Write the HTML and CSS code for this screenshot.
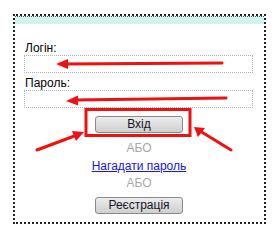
FILE: index.html
```html
<!DOCTYPE html>
<html lang="uk">
<head>
    <meta charset="UTF-8">
    <title>Вхід</title>
    <link rel="stylesheet" href="styles.css">
</head>
<body>
    <div class="frame">
        <div class="band"></div>
        <form class="login-form">
            <label class="field-label" for="login">Логін:</label>
            <input class="field" type="text" id="login">
            <label class="field-label second" for="password">Пароль:</label>
            <input class="field" type="password" id="password">

            <div class="actions">
                <button type="button" class="btn btn-enter">Вхід</button>
                <span class="or or-first">АБО</span>
                <a href="#" class="remind">Нагадати пароль</a>
                <span class="or or-second">АБО</span>
                <button type="button" class="btn btn-register">Реєстрація</button>
            </div>
        </form>
    </div>

    <!-- red annotation marks over the form -->
    <svg class="marks" width="279" height="242" viewBox="0 0 279 242">
        <g stroke="#f01010" stroke-width="3" fill="none" stroke-linecap="round">
            <line x1="222" y1="63" x2="64" y2="64"/>
            <line x1="226" y1="98" x2="74" y2="100"/>
            <line x1="37" y1="150" x2="77" y2="135"/>
            <line x1="231" y1="150" x2="200" y2="131"/>
            <rect x="86" y="109.5" width="104" height="26" stroke-linecap="butt"/>
        </g>
        <g fill="#f01010">
            <polygon points="56,64 68,59 68,69"/>
            <polygon points="66,101 78,95.5 78,105.5"/>
            <polygon points="84,132 72,131 76,141"/>
            <polygon points="194,127 198,137 205,128"/>
        </g>
    </svg>
</body>
</html>
```

FILE: styles.css
```css
body {
    margin: 0;
    position: relative;
    width: 279px;
    height: 242px;
    background: #fff;
    font-family: "Liberation Sans", Arial, sans-serif;
    font-size: 12px;
    color: #000;
}
.frame {
    box-sizing: border-box;
    width: 253px;
    height: 210px;
    margin: 14px 0 0 13px;
    border: 2px dotted #222;
}
.band {
    height: 8px;
    background-color: #d2f4ee;
    border-top: 1px dotted #555;
    box-sizing: border-box;
}
.login-form {
    display: flex;
    flex-direction: column;
    padding: 0 10px 0 9px;
}
.field-label {
    line-height: 12px;
    margin: 18px 0 0 1px;
}
.field-label.second {
    margin-top: 4px;
}
.field {
    box-sizing: border-box;
    width: 229px;
    height: 18px;
    margin: 1px 0 0;
    border: 1px dotted #b0b0c4;
    background: #fff;
    outline: none;
}
.actions {
    display: flex;
    flex-direction: column;
    align-items: center;
}
.btn {
    box-sizing: border-box;
    width: 88px;
    height: 17px;
    padding: 0;
    border: 1px solid #8a8a8a;
    border-radius: 3px;
    background: linear-gradient(#ececec, #cfcfcf);
    font-family: "Liberation Sans", Arial, sans-serif;
    font-size: 12px;
    line-height: 15px;
    color: #14142a;
}
.btn-enter {
    margin-top: 8px;
}
.btn-register {
    margin-top: 7px;
}
.or {
    line-height: 14px;
    color: #a8a8a8;
}
.or-first {
    margin-top: 8px;
}
.or-second {
    margin-top: 3px;
}
.remind {
    margin-top: 4px;
    line-height: 14px;
    color: #1515e8;
}
.marks {
    position: absolute;
    top: 0;
    left: 0;
}
```
